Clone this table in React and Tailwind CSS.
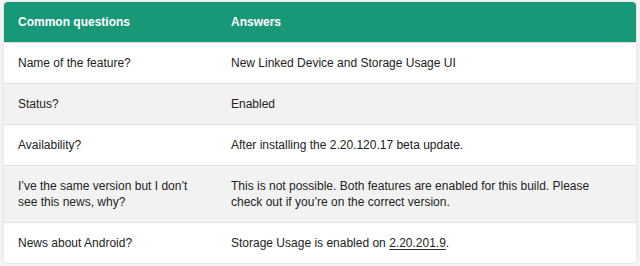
import React from "react";

const rows = [
  { q: "Name of the feature?", a: "New Linked Device and Storage Usage UI", alt: false },
  { q: "Status?", a: "Enabled", alt: true },
  { q: "Availability?", a: "After installing the 2.20.120.17 beta update.", alt: false },
  {
    q: (
      <>
        I’ve the same version but I don’t
        <br />
        see this news, why?
      </>
    ),
    a: (
      <>
        This is not possible. Both features are enabled for this build. Please
        <br />
        check out if you’re on the correct version.
      </>
    ),
    alt: true,
  },
  {
    q: "News about Android?",
    a: (
      <>
        Storage Usage is enabled on{" "}
        <span className="underline underline-offset-2 decoration-[#333]">2.20.201.9</span>.
      </>
    ),
    alt: false,
  },
];

export default function App() {
  return (
    <div
      className="w-[640px] h-[266px] bg-[#f3f3f3] px-[4px] pt-[2px]"
      style={{ fontFamily: '"Liberation Sans", Arial, sans-serif' }}
    >
      <div className="w-[632px] rounded-[4px] overflow-hidden bg-white shadow-[0_0_2px_rgba(0,0,0,0.18)] text-[12px] leading-[16px] text-[#222]">
        <div className="flex bg-[#189878] text-white font-bold border-b border-[#dedede]">
          <div className="w-[213px] pl-[14px] py-[12px]">Common questions</div>
          <div className="flex-1 pl-[14px] py-[12px]">Answers</div>
        </div>
        {rows.map((r, i) => (
          <div
            key={i}
            className={`flex ${r.alt ? "bg-[#f2f2f2]" : "bg-white"} ${
              i < rows.length - 1 ? "border-b border-[#e2e2e2]" : ""
            }`}
          >
            <div className="w-[213px] pl-[14px] py-[12px]">{r.q}</div>
            <div className="flex-1 pl-[14px] py-[12px]">{r.a}</div>
          </div>
        ))}
      </div>
    </div>
  );
}
